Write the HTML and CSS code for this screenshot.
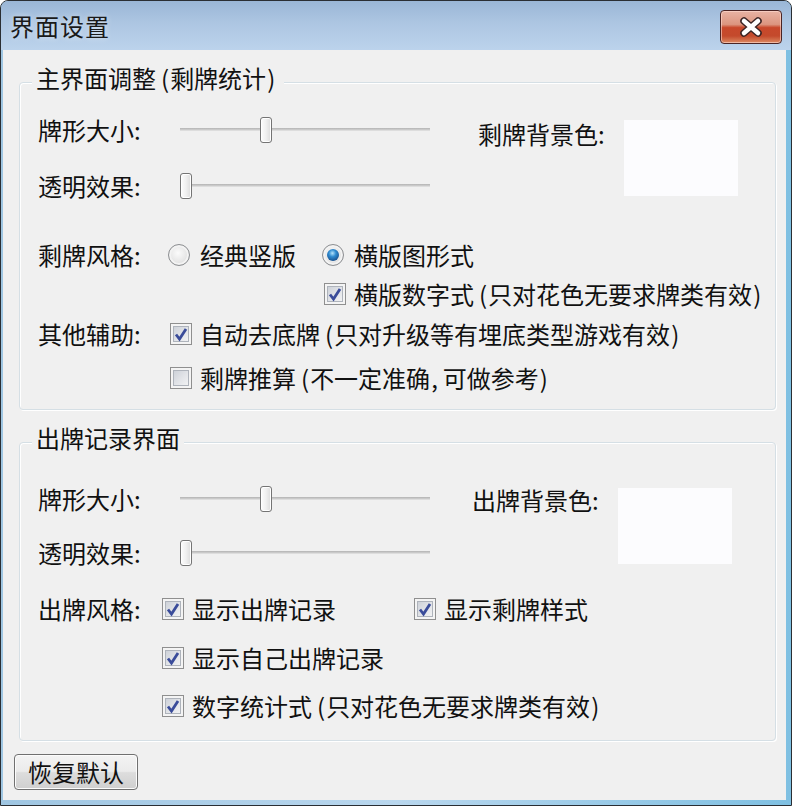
FILE: index.html
```html
<!DOCTYPE html>
<html lang="zh-CN">
<head>
<meta charset="utf-8">
<title>界面设置</title>
<link rel="stylesheet" href="styles.css">
</head>
<body>
<div class="window">
  <div class="titlebar">
    <span class="title">界面设置</span>
    <span class="close">
      <svg width="26" height="20" viewBox="0 0 26 20">
        <path d="M6 4 L20 16 M20 4 L6 16" stroke="#3b2424" stroke-width="7.5" stroke-linecap="round" fill="none"/>
        <path d="M6 4 L20 16 M20 4 L6 16" stroke="#ffffff" stroke-width="4.5" stroke-linecap="round" fill="none"/>
      </svg>
    </span>
  </div>
  <div class="client">
    <div class="group g1">
      <span class="legend">主界面调整<span class="po">(</span>剩牌统计<span class="pc">)</span></span>
      <div class="topgrid tg1">
        <span class="lbl r1">牌形大小:</span>
        <span class="slider r1"><span class="thumb" style="left:80px"></span></span>
        <span class="bglbl">剩牌背景色:</span>
        <span class="swatch"></span>
        <span class="lbl r2">透明效果:</span>
        <span class="slider r2"><span class="thumb" style="left:0px"></span></span>
      </div>
      <div class="row row-radio">
        <span class="lbl w130">剩牌风格:</span>
        <span class="opt o1"><span class="rb"></span><span>经典竖版</span></span>
        <span class="opt"><span class="rb on"></span><span>横版图形式</span></span>
      </div>
      <div class="row row-c1">
        <span class="opt"><span class="cb on"><svg width="16" height="16" viewBox="0 0 16 16"><path d="M3 8.5 L6.5 13 L13 3" stroke="#3a4c9a" stroke-width="2.8" fill="none"/></svg></span><span>横版数字式<span class="po">(</span>只对花色无要求牌类有效<span class="pc">)</span></span></span>
      </div>
      <div class="row row-c2">
        <span class="lbl w132">其他辅助:</span>
        <span class="opt"><span class="cb on"><svg width="16" height="16" viewBox="0 0 16 16"><path d="M3 8.5 L6.5 13 L13 3" stroke="#3a4c9a" stroke-width="2.8" fill="none"/></svg></span><span>自动去底牌<span class="po">(</span>只对升级等有埋底类型游戏有效<span class="pc">)</span></span></span>
      </div>
      <div class="row row-c3">
        <span class="opt"><span class="cb"></span><span>剩牌推算<span class="po">(</span>不一定准确<span class="pc">,</span>可做参考<span class="pc">)</span></span></span>
      </div>
    </div>

    <div class="group g2">
      <span class="legend">出牌记录界面</span>
      <div class="topgrid tg2">
        <span class="lbl r1">牌形大小:</span>
        <span class="slider r1"><span class="thumb" style="left:80px"></span></span>
        <span class="bglbl">出牌背景色:</span>
        <span class="swatch"></span>
        <span class="lbl r2">透明效果:</span>
        <span class="slider r2"><span class="thumb" style="left:0px"></span></span>
      </div>
      <div class="row row-d1">
        <span class="lbl w124">出牌风格:</span>
        <span class="opt o252"><span class="cb on"><svg width="16" height="16" viewBox="0 0 16 16"><path d="M3 8.5 L6.5 13 L13 3" stroke="#3a4c9a" stroke-width="2.8" fill="none"/></svg></span><span>显示出牌记录</span></span>
        <span class="opt"><span class="cb on"><svg width="16" height="16" viewBox="0 0 16 16"><path d="M3 8.5 L6.5 13 L13 3" stroke="#3a4c9a" stroke-width="2.8" fill="none"/></svg></span><span>显示剩牌样式</span></span>
      </div>
      <div class="row row-d2">
        <span class="opt"><span class="cb on"><svg width="16" height="16" viewBox="0 0 16 16"><path d="M3 8.5 L6.5 13 L13 3" stroke="#3a4c9a" stroke-width="2.8" fill="none"/></svg></span><span>显示自己出牌记录</span></span>
      </div>
      <div class="row row-d3">
        <span class="opt"><span class="cb on"><svg width="16" height="16" viewBox="0 0 16 16"><path d="M3 8.5 L6.5 13 L13 3" stroke="#3a4c9a" stroke-width="2.8" fill="none"/></svg></span><span>数字统计式<span class="po">(</span>只对花色无要求牌类有效<span class="pc">)</span></span></span>
      </div>
    </div>

    <div class="btnrow"><button class="btn">恢复默认</button></div>
  </div>
</div>
</body>
</html>
```

FILE: styles.css
```css
* { box-sizing: border-box; }
html, body { margin: 0; padding: 0; background: #ffffff; }
body {
  font-family: "Noto Sans CJK SC", "Noto Sans", "DejaVu Sans", sans-serif;
  font-size: 24px;
  color: #111111;
}
.po { padding: 0 1px 0 5px; }
.pc { padding: 0 5px 0 1px; }
.window {
  width: 792px;
  height: 806px;
  border: 1px solid #2a2e33;
  border-radius: 8px 8px 0 0;
  background: linear-gradient(90deg, #9fc6e2 0%, #b9d7ee 50%, #7fc0e2 100%);
  display: flex;
  flex-direction: column;
  overflow: hidden;
}
.titlebar {
  height: 49px;
  flex: none;
  background: linear-gradient(180deg, #9ab6d6 0%, #adc6e2 45%, #bcd3ec 100%);
  display: flex;
  align-items: flex-start;
  justify-content: space-between;
  padding: 0 9px 0 9px;
}
.title {
  line-height: 26px;
  margin-top: 12px;
  color: #1a1a1a;
  letter-spacing: 1px;
  text-shadow: 0 0 6px rgba(255,255,255,0.6);
}
.close {
  margin-top: 9px;
  width: 62px;
  height: 34px;
  border: 1px solid #4a2424;
  border-radius: 4px;
  background: linear-gradient(180deg, #e8b3a4 0%, #dc957f 42%, #c8482b 52%, #c44a2c 78%, #dc8a62 100%);
  box-shadow: inset 0 0 0 1px rgba(255,220,210,0.6);
  display: flex;
  align-items: center;
  justify-content: center;
}
.client {
  flex: 1;
  margin: 0 5px 5px 2px;
  background: #f0f0f0;
  padding: 32px 10px 0 16px;
  display: flex;
  flex-direction: column;
}
.group {
  position: relative;
  border: 1px solid #d5dfe5;
  border-radius: 4px;
  box-shadow: inset 1px 1px 0 #ffffff, 1px 1px 0 #ffffff;
  padding-left: 18px;
}
.g1 { padding-top: 19px; padding-bottom: 12px; }
.g2 { margin-top: 32px; padding-top: 29px; padding-bottom: 14px; }
.legend {
  position: absolute;
  top: -18px;
  left: 12px;
  padding: 0 4px;
  background: #f0f0f0;
  line-height: 26px;
  color: #111;
  white-space: nowrap;
}
.topgrid {
  display: grid;
  align-items: center;
}
.tg1 { grid-template-columns: 142px 250px 48px 146px 114px; grid-template-rows: 56px 56px; }
.tg2 { grid-template-columns: 142px 250px 42px 146px 114px; grid-template-rows: 54px 54px; }
.lbl { line-height: 26px; white-space: nowrap; }
.lbl.r1 { grid-column: 1; grid-row: 1; }
.lbl.r2 { grid-column: 1; grid-row: 2; }
.slider.r1 { grid-column: 2; grid-row: 1; }
.slider.r2 { grid-column: 2; grid-row: 2; }
.bglbl {
  grid-column: 4; grid-row: 1;
  align-self: start;
  line-height: 26px;
  white-space: nowrap;
}
.tg1 .bglbl { margin-top: 19px; }
.tg2 .bglbl { margin-top: 15px; }
.swatch {
  grid-column: 5; grid-row: 1 / span 2;
  align-self: center;
  height: 76px;
  background: #fcfcfe;
}
.slider {
  position: relative;
  height: 26px;
  width: 250px;
}
.slider::before {
  content: "";
  position: absolute;
  left: 0; right: 0;
  top: 11px;
  height: 3px;
  background: linear-gradient(180deg, #b3b3b3 0%, #c9c9c9 50%, #e7e7e7 100%);
}
.thumb {
  position: absolute;
  top: 0;
  width: 12px;
  height: 26px;
  border: 1px solid #747474;
  border-radius: 3px;
  background: linear-gradient(90deg, #fdfdfd 0%, #f0f0f0 50%, #dcdcdc 100%);
  box-shadow: inset 0 0 0 1px #ffffff;
}
.row {
  display: flex;
  align-items: center;
  height: 38px;
}
.row-radio { margin-top: 22px; }
.row-c1 { margin-top: 1px; padding-left: 286px; }
.row-c2 { margin-top: 2px; }
.row-c3 { margin-top: 6px; padding-left: 132px; }
.row-d1 { margin-top: 9px; height: 40px; }
.row-d2 { margin-top: 9px; height: 40px; padding-left: 124px; }
.row-d3 { margin-top: 8px; height: 40px; padding-left: 124px; }
.w130 { width: 130px; flex: none; }
.w132 { width: 132px; flex: none; }
.w124 { width: 124px; flex: none; }
.opt {
  display: flex;
  align-items: center;
  line-height: 26px;
  white-space: nowrap;
}
.o1 { width: 154px; flex: none; }
.o252 { width: 252px; flex: none; }
.rb {
  width: 22px; height: 22px;
  border-radius: 50%;
  border: 1px solid #8c8e91;
  background: radial-gradient(circle at 45% 40%, #fbfbfb 0%, #e6e6e6 55%, #cfd0d2 100%);
  box-shadow: inset 0 0 0 2px #f3f3f3;
  margin-right: 10px;
  flex: none;
  display: flex;
  align-items: center;
  justify-content: center;
}
.rb.on::after {
  content: "";
  width: 12px; height: 12px;
  border-radius: 50%;
  background: radial-gradient(circle at 45% 35%, #b5e2fa 0%, #2f8bd0 35%, #1a5391 75%, #163c68 100%);
}
.cb {
  width: 22px; height: 22px;
  border: 1px solid #8f8f8f;
  background: linear-gradient(135deg, #c6cbd3 0%, #e3e5e9 55%, #f8f8f8 100%);
  box-shadow: inset 0 0 0 2px #f4f4f4, inset 0 0 0 3px #aeb3bb;
  margin-right: 8px;
  flex: none;
  display: flex;
  align-items: center;
  justify-content: center;
}
.btnrow { margin-top: 13px; margin-left: -5px; }
.btn {
  font-family: inherit;
  font-size: 24px;
  color: #111;
  width: 124px;
  height: 36px;
  padding: 0;
  line-height: 26px;
  border: 1px solid #707070;
  border-radius: 4px;
  background: linear-gradient(180deg, #f3f3f3 0%, #ebebeb 48%, #dddddd 52%, #cfcfcf 100%);
  box-shadow: inset 0 0 0 1px #fcfcfc;
}
```
